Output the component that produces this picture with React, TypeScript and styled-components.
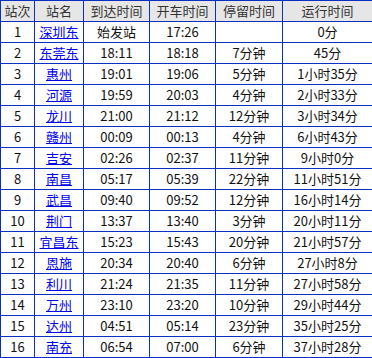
import styled, { createGlobalStyle } from "styled-components";

const GlobalStyle = createGlobalStyle`
  body {
    margin: 0;
    background: #fff;
    font-family: "Noto Sans CJK SC", "Noto Sans", sans-serif;
  }
`;

const Table = styled.table`
  width: 372px;
  table-layout: fixed;
  border-collapse: collapse;
  font-size: 13px;
  color: #111;
`;

const HeadCell = styled.th`
  height: 20px;
  padding: 0;
  border: 1px solid #0a2fc4;
  background: #e6e6e6;
  color: #333;
  font-weight: normal;
  text-align: center;
  line-height: 20px;
`;

const Cell = styled.td`
  height: 20px;
  padding: 0;
  border: 1px solid #0a2fc4;
  text-align: center;
  line-height: 20px;
  white-space: nowrap;
`;

const StationLink = styled.a`
  color: #0000ee;
  text-decoration: underline;
`;

const widths = [34, 49, 66, 66, 67, 90];
const headers = ["站次", "站名", "到达时间", "开车时间", "停留时间", "运行时间"];

const stops: [string, string, string, string, string][] = [
  ["深圳东", "始发站", "17:26", "", "0分"],
  ["东莞东", "18:11", "18:18", "7分钟", "45分"],
  ["惠州", "19:01", "19:06", "5分钟", "1小时35分"],
  ["河源", "19:59", "20:03", "4分钟", "2小时33分"],
  ["龙川", "21:00", "21:12", "12分钟", "3小时34分"],
  ["赣州", "00:09", "00:13", "4分钟", "6小时43分"],
  ["吉安", "02:26", "02:37", "11分钟", "9小时0分"],
  ["南昌", "05:17", "05:39", "22分钟", "11小时51分"],
  ["武昌", "09:40", "09:52", "12分钟", "16小时14分"],
  ["荆门", "13:37", "13:40", "3分钟", "20小时11分"],
  ["宜昌东", "15:23", "15:43", "20分钟", "21小时57分"],
  ["恩施", "20:34", "20:40", "6分钟", "27小时8分"],
  ["利川", "21:24", "21:35", "11分钟", "27小时58分"],
  ["万州", "23:10", "23:20", "10分钟", "29小时44分"],
  ["达州", "04:51", "05:14", "23分钟", "35小时25分"],
  ["南充", "06:54", "07:00", "6分钟", "37小时28分"],
];

export default function App() {
  return (
    <>
      <GlobalStyle />
      <Table>
        <colgroup>
          {widths.map((w, i) => (
            <col key={i} style={{ width: w }} />
          ))}
        </colgroup>
        <thead>
          <tr>
            {headers.map((h) => (
              <HeadCell key={h}>{h}</HeadCell>
            ))}
          </tr>
        </thead>
        <tbody>
          {stops.map(([name, arrive, depart, stay, run], i) => (
            <tr key={name}>
              <Cell>{i + 1}</Cell>
              <Cell>
                <StationLink href="#">{name}</StationLink>
              </Cell>
              <Cell>{arrive}</Cell>
              <Cell>{depart}</Cell>
              <Cell>{stay}</Cell>
              <Cell>{run}</Cell>
            </tr>
          ))}
        </tbody>
      </Table>
    </>
  );
}
